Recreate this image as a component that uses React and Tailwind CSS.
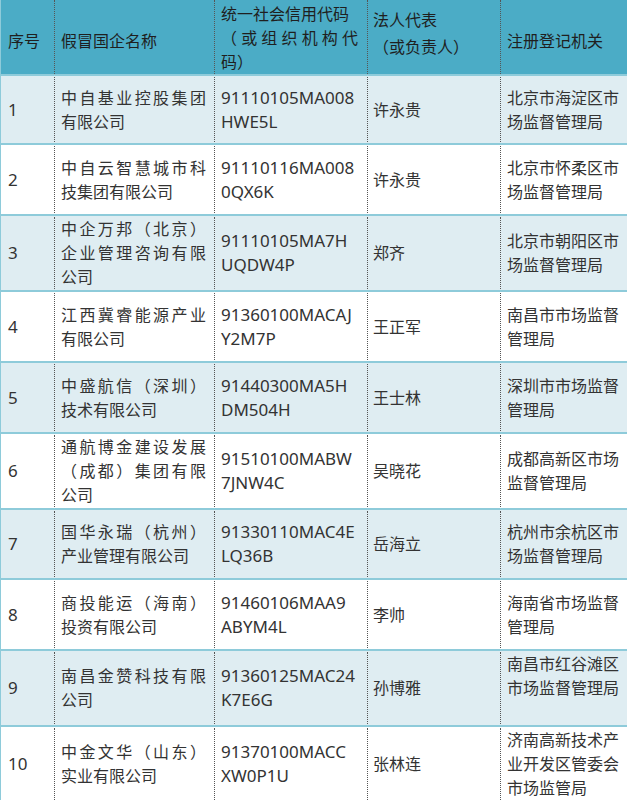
import React from "react";

const cols = "grid grid-cols-[53px_160px_153px_133px_127px]";
const cell = "border-l border-dotted border-[#555] flex flex-col justify-center";

const rows = [
  { n: "1", h: "min-h-[69px]", name: ["中自基业控股集团", "有限公司"], code: ["91110105MA008", "HWE5L"], rep: "许永贵", org: ["北京市海淀区市", "场监督管理局"] },
  { n: "2", h: "min-h-[71px]", name: ["中自云智慧城市科", "技集团有限公司"], code: ["91110116MA008", "0QX6K"], rep: "许永贵", org: ["北京市怀柔区市", "场监督管理局"] },
  { n: "3", h: "min-h-[70px]", name: ["中企万邦（北京）", "企业管理咨询有限", "公司"], code: ["91110105MA7H", "UQDW4P"], rep: "郑齐", org: ["北京市朝阳区市", "场监督管理局"] },
  { n: "4", h: "min-h-[71px]", name: ["江西冀睿能源产业", "有限公司"], code: ["91360100MACAJ", "Y2M7P"], rep: "王正军", org: ["南昌市市场监督", "管理局"] },
  { n: "5", h: "min-h-[71px]", name: ["中盛航信（深圳）", "技术有限公司"], code: ["91440300MA5H", "DM504H"], rep: "王士林", org: ["深圳市市场监督", "管理局"] },
  { n: "6", h: "min-h-[70px]", name: ["通航博金建设发展", "（成都）集团有限", "公司"], code: ["91510100MABW", "7JNW4C"], rep: "吴晓花", org: ["成都高新区市场", "监督管理局"] },
  { n: "7", h: "min-h-[70px]", name: ["国华永瑞（杭州）", "产业管理有限公司"], code: ["91330110MAC4E", "LQ36B"], rep: "岳海立", org: ["杭州市余杭区市", "场监督管理局"] },
  { n: "8", h: "min-h-[71px]", name: ["商投能运（海南）", "投资有限公司"], code: ["91460106MAA9", "ABYM4L"], rep: "李帅", org: ["海南省市场监督", "管理局"] },
  { n: "9", h: "min-h-[70px]", name: ["南昌金赞科技有限", "公司"], code: ["91360125MAC24", "K7E6G"], rep: "孙博雅", org: ["南昌市红谷滩区", "市场监督管理局", "\u00a0"] },
  { n: "10", h: "min-h-[70px]", name: ["中金文华（山东）", "实业有限公司"], code: ["91370100MACC", "XW0P1U"], rep: "张林连", org: ["济南高新技术产", "业开发区管委会", "市场监管局"] },
];

// every line but the last is spread over the full width, like Word's justify
const Justified = ({ lines }) =>
  lines.map((line, i) =>
    i < lines.length - 1 ? (
      <div key={i} className="flex justify-between">
        {[...line].map((c, j) => (
          <span key={j}>{c}</span>
        ))}
      </div>
    ) : (
      <div key={i}>{line}</div>
    )
  );

const App = () => {
  return (
    <div
      className="w-[627px] h-[800px] overflow-hidden bg-white text-[16px] leading-[24px] text-[#333]"
      style={{ fontFamily: '"Noto Sans", "Noto Sans CJK SC", sans-serif' }}
    >
      <div className="border-l border-[#8ecbda]">
        {/* header */}
        <div className={`${cols} h-[74px] bg-[#4bacc6] text-[#1f1f1f]`}>
          <div className="pl-[7px] pt-[29px]">序号</div>
          <div className="border-l border-dotted border-[#555] pl-[6px] pt-[29px]">假冒国企名称</div>
          <div className="border-l border-dotted border-[#555] pl-[6px] pr-[9px] pt-[2px]">
            <div>统一社会信用代码</div>
            <Justified lines={["（或组织机构代", "码）"]} />
          </div>
          <div className="border-l border-dotted border-[#555] pl-[5px] pt-[7px] leading-[27px]">
            <div>法人代表</div>
            <div>（或负责人）</div>
          </div>
          <div className="border-l border-dotted border-[#555] pl-[6px] pt-[29px]">注册登记机关</div>
        </div>

        {rows.map((r, i) => (
          <div
            key={r.n}
            className={`${cols} ${r.h} border-t-2 border-[#8ecbda] py-px ${
              i % 2 === 0 ? "bg-[#dfedf2]" : "bg-white"
            }`}
          >
            <div className="flex flex-col justify-center pl-[7px] text-[17px]">{r.n}</div>
            <div className={`${cell} pl-[6px] pr-[8px]`}>
              <Justified lines={r.name} />
            </div>
            <div className={`${cell} pl-[6px] text-[17px]`}>
              {r.code.map((c) => (
                <div key={c}>{c}</div>
              ))}
            </div>
            <div className={`${cell} pl-[5px]`}>{r.rep}</div>
            <div className={`${cell} pl-[6px]`}>
              {r.org.map((o, j) => (
                <div key={j}>{o}</div>
              ))}
            </div>
          </div>
        ))}
      </div>
    </div>
  );
};

export default App;
